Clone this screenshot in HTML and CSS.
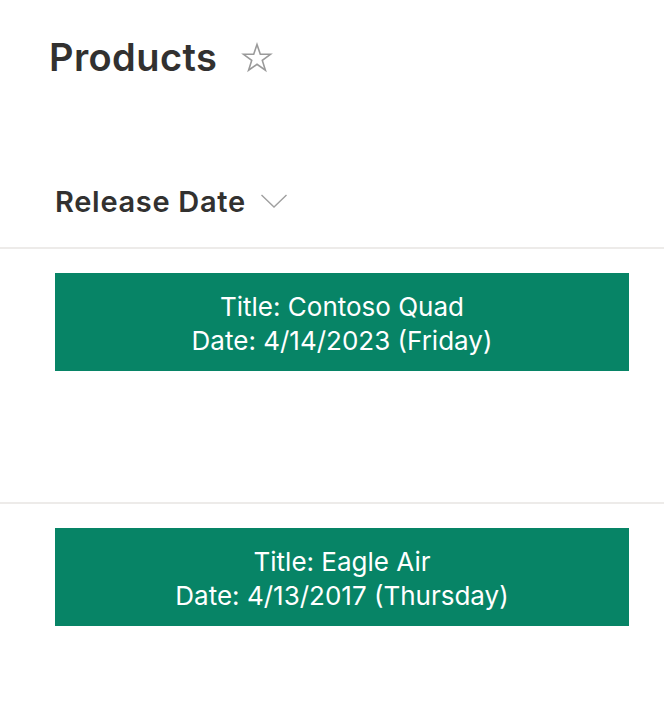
FILE: index.html
```html
<!DOCTYPE html>
<html>
<head>
<meta charset="utf-8">
<link rel="stylesheet" href="styles.css">
</head>
<body>
<div class="page">
  <header class="title-bar">
    <h1 class="title">Products</h1>
    <svg class="star" width="32" height="32" viewBox="0 0 32 32" aria-hidden="true">
      <path d="M16 2.5 L19.3 12.2 L29.5 12.3 L21.3 18.4 L24.4 28.2 L16 22.3 L7.6 28.2 L10.7 18.4 L2.5 12.3 L12.7 12.2 Z" fill="none" stroke="#9a9a9a" stroke-width="1.6" stroke-linejoin="miter"/>
    </svg>
  </header>
  <div class="group-header">
    <span class="group-label">Release Date</span>
    <svg class="chevron" width="28" height="16" viewBox="0 0 28 16" aria-hidden="true">
      <path d="M1.5 2 L14 14 L26.5 2" fill="none" stroke="#a0a0a0" stroke-width="1.4"/>
    </svg>
  </div>
  <div class="row">
    <div class="card">
      <div>Title: Contoso Quad</div>
      <div>Date: 4/14/2023 (Friday)</div>
    </div>
  </div>
  <div class="row">
    <div class="card">
      <div>Title: Eagle Air</div>
      <div>Date: 4/13/2017 (Thursday)</div>
    </div>
  </div>
</div>
</body>
</html>
```
FILE: styles.css
```css
html, body {
  margin: 0;
  padding: 0;
  background: #ffffff;
}
body {
  font-family: Inter, "Noto Sans", sans-serif;
  color: #323130;
}
.page {
  width: 664px;
}
.title-bar {
  display: flex;
  align-items: center;
  padding: 35px 0 0 49px;
  height: 44px;
}
.title {
  margin: 0;
  font-size: 38px;
  font-weight: 600;
  letter-spacing: 0.4px;
  line-height: 44px;
}
.star {
  margin-left: 24px;
  margin-top: 2px;
}
.group-header {
  display: flex;
  align-items: flex-start;
  padding: 4px 0 0 55px;
  box-sizing: border-box;
  margin-top: 101px;
  height: 69px;
  border-bottom: 2px solid #edebe9;
}
.group-label {
  font-size: 29px;
  font-weight: 600;
  letter-spacing: 0.7px;
  line-height: 36px;
}
.chevron {
  margin-left: 14px;
  margin-top: 9px;
}
.row {
  height: 255px;
  padding: 24px 35px 0 55px;
  box-sizing: border-box;
  border-bottom: 2px solid #edebe9;
}
.row:last-child {
  height: auto;
  border-bottom: none;
}
.card {
  background: #078466;
  color: #ffffff;
  height: 98px;
  box-sizing: border-box;
  padding: 17px 0 15px;
  text-align: center;
  font-size: 26px;
  line-height: 34px;
}
```
